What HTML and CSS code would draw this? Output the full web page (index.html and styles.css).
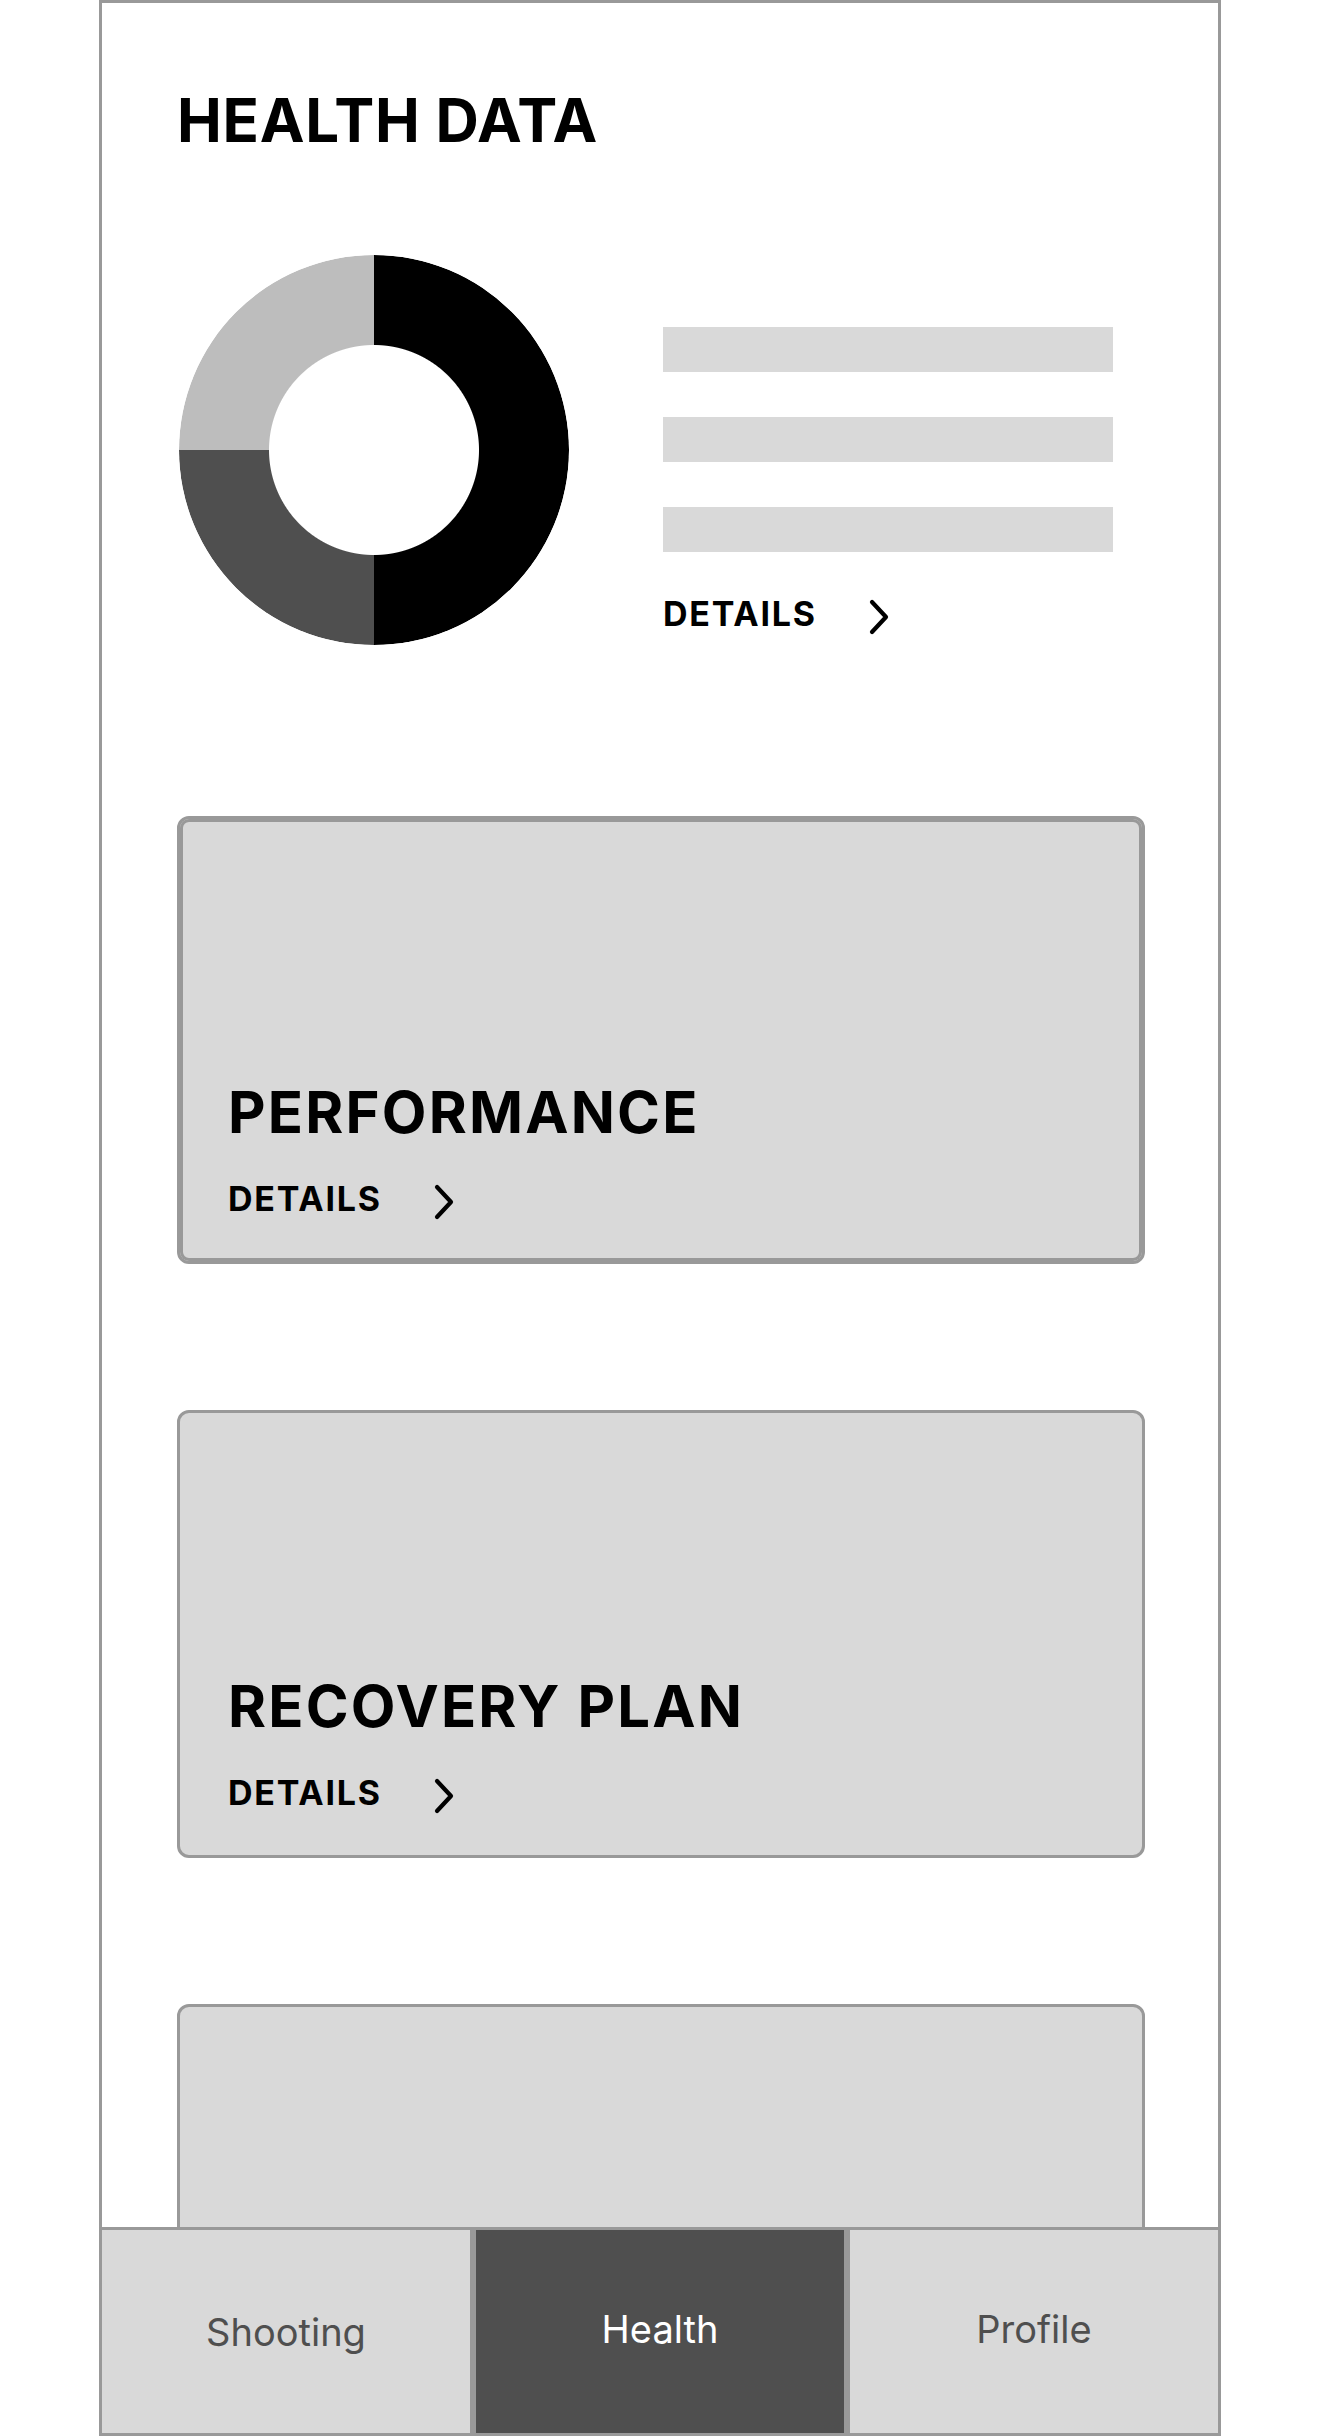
FILE: index.html
```html
<!DOCTYPE html>
<html lang="en">
<head>
  <meta charset="UTF-8"/>
  <title>Health Data</title>
  <link rel="stylesheet" href="styles.css">
</head>
<body>
  <div class="phone">
    <main class="content">
      <h1 class="page-title">HEALTH DATA</h1>

      <section class="summary">
        <div class="donut"></div>
        <div class="summary-info">
          <div class="bar"></div>
          <div class="bar"></div>
          <div class="bar"></div>
          <a class="details" href="#">
            <span>DETAILS</span>
            <svg class="chevron" width="22" height="38" viewBox="0 0 22 38"><path d="M4 4 L18 19 L4 34"/></svg>
          </a>
        </div>
      </section>

      <div class="card card-active">
        <h2>PERFORMANCE</h2>
        <a class="details" href="#">
          <span>DETAILS</span>
          <svg class="chevron" width="22" height="38" viewBox="0 0 22 38"><path d="M4 4 L18 19 L4 34"/></svg>
        </a>
      </div>

      <div class="card">
        <h2>RECOVERY PLAN</h2>
        <a class="details" href="#">
          <span>DETAILS</span>
          <svg class="chevron" width="22" height="38" viewBox="0 0 22 38"><path d="M4 4 L18 19 L4 34"/></svg>
        </a>
      </div>

      <div class="card"></div>
    </main>

    <nav class="tabbar">
      <a class="tab tab-low" href="#">Shooting</a>
      <a class="tab active" href="#">Health</a>
      <a class="tab" href="#">Profile</a>
    </nav>
  </div>
</body>
</html>
```

FILE: styles.css
```css
body { margin:0; background:#fff; font-family:'Inter','Liberation Sans',sans-serif; color:#000; }
a { text-decoration:none; color:inherit; }

.phone { width:1122px; height:2436px; margin:0 auto; box-sizing:border-box; border:3px solid #999; display:flex; flex-direction:column; }
.content { flex:1; overflow:hidden; padding:87px 73px 0 75px; }

.page-title { margin:0; font-size:60px; line-height:60px; font-weight:700; letter-spacing:0.7px; }

.summary { display:flex; gap:94px; margin-top:105px; }
.donut { width:390px; height:390px; margin-left:2px; flex-shrink:0; border-radius:50%;
  background:conic-gradient(#000 0 50%, #4f4f4f 0 75%, #bdbdbd 0);
  -webkit-mask:radial-gradient(circle, transparent 104.5px, #000 105.5px);
  mask:radial-gradient(circle, transparent 104.5px, #000 105.5px); }
.summary-info { display:flex; flex-direction:column; gap:45px; padding-top:72px; }
.bar { width:450px; height:45px; background:#d9d9d9; }

.details { display:flex; align-items:flex-start; gap:51px; font-size:34px; line-height:34px; font-weight:700; letter-spacing:1.8px; }
.chevron { margin-top:1px; }
.chevron path { fill:none; stroke:#000; stroke-width:4.2; stroke-linecap:round; stroke-linejoin:round; }

.card { height:448px; box-sizing:border-box; margin-top:146px; padding:0 48px 40px; background:#d9d9d9; border:3px solid #999; border-radius:12px; display:flex; flex-direction:column; justify-content:flex-end; }
.card-active { margin-top:171px; box-shadow:inset 0 0 0 3px #999; }
.card h2 { margin:0 0 41px; font-size:58px; line-height:58px; font-weight:700; letter-spacing:2.2px; }
.card:last-child { flex-shrink:0; }

.tabbar { display:grid; grid-template-columns:repeat(3, 1fr); gap:6px; height:206px; box-sizing:border-box; border-top:3px solid #999; background:#999; }
.tab { display:flex; align-items:center; justify-content:center; padding-bottom:5px; background:#d9d9d9; color:#4f4f4f; font-size:38px; }
.tab.active { background:#4f4f4f; color:#fff; }
.tab-low { padding-bottom:0; }
```
